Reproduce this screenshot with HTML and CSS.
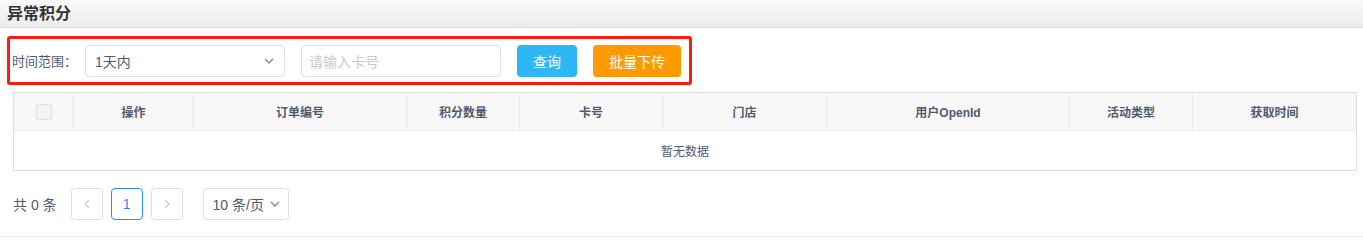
FILE: index.html
```html
<!DOCTYPE html>
<html lang="zh-CN">
<head>
    <meta charset="UTF-8">
    <title>异常积分</title>
    <link rel="stylesheet" href="styles.css">
</head>
<body>

    <div class="page-head">
        <h1>异常积分</h1>
    </div>

    <div class="content">
        <div class="search-box">
            <span class="label">时间范围：</span>
            <div class="select">
                <span>1天内</span>
                <svg class="arrow" width="10" height="6" viewBox="0 0 10 6"><path d="M1 1 L5 5 L9 1" fill="none" stroke="#808695" stroke-width="1.3"/></svg>
            </div>
            <div class="input"><span class="placeholder">请输入卡号</span></div>
            <button class="btn btn-info">查询</button>
            <button class="btn btn-warning">批量下传</button>
        </div>

        <table class="grid">
            <colgroup>
                <col style="width:60px">
                <col style="width:120px">
                <col style="width:213px">
                <col style="width:113px">
                <col style="width:143px">
                <col style="width:164px">
                <col style="width:243px">
                <col style="width:123px">
                <col>
            </colgroup>
            <thead>
                <tr>
                    <th><span class="checkbox"></span></th>
                    <th>操作</th>
                    <th>订单编号</th>
                    <th>积分数量</th>
                    <th>卡号</th>
                    <th>门店</th>
                    <th>用户OpenId</th>
                    <th>活动类型</th>
                    <th>获取时间</th>
                </tr>
            </thead>
            <tbody>
                <tr>
                    <td colspan="9" class="empty">暂无数据</td>
                </tr>
            </tbody>
        </table>

        <div class="pager">
            <span class="total">共 0 条</span>
            <span class="page-item disabled">
                <svg width="8" height="10" viewBox="0 0 8 10"><path d="M6 1 L2 5 L6 9" fill="none" stroke="#c5c8ce" stroke-width="1.2"/></svg>
            </span>
            <span class="page-item active">1</span>
            <span class="page-item disabled">
                <svg width="8" height="10" viewBox="0 0 8 10"><path d="M2 1 L6 5 L2 9" fill="none" stroke="#c5c8ce" stroke-width="1.2"/></svg>
            </span>
            <span class="page-size">10 条/页
                <svg width="10" height="6" viewBox="0 0 10 6"><path d="M1 1 L5 5 L9 1" fill="none" stroke="#808695" stroke-width="1.3"/></svg>
            </span>
        </div>
    </div>

    <div class="bottom-line"></div>

</body>
</html>
```

FILE: styles.css
```css
body {
    margin: 0;
    background-color: #fff;
    color: #515a6e;
    font-family: "Liberation Sans", "Noto Sans CJK SC", sans-serif;
    font-size: 12px;
}
.page-head {
    height: 27px;
    border-bottom: 1px solid #dcdcdc;
    background: linear-gradient(to bottom, #fafafa, #ececec);
    padding-left: 7px;
}
.page-head h1 {
    margin: 0;
    font-size: 16px;
    line-height: 27px;
    color: #333;
    font-weight: bold;
}
.content {
    padding: 8px 6px 0 7px;
}
.search-box {
    display: flex;
    align-items: center;
    width: 677px;
    height: 43px;
    border: 3px solid #ff1a12;
    border-radius: 3px;
    padding: 0 0 0 2px;
    box-sizing: content-box;
}
.search-box > * {
    flex-shrink: 0;
    white-space: nowrap;
}
.label {
    font-size: 13px;
    width: 73px;
}
.select, .input {
    box-sizing: border-box;
    height: 32px;
    border: 1px solid #dcdee2;
    border-radius: 4px;
    display: flex;
    align-items: center;
    padding: 0 10px 0 9px;
    font-size: 14px;
}
.select {
    width: 200px;
    justify-content: space-between;
    margin-right: 16px;
}
.input {
    width: 200px;
    margin-right: 16px;
    padding-left: 7px;
}
.placeholder {
    color: #c5c8ce;
}
.btn {
    height: 32px;
    border: none;
    border-radius: 4px;
    color: #fff;
    font-size: 14px;
    font-family: inherit;
    padding: 0 16px;
    margin-right: 16px;
}
.btn-info {
    width: 60px;
    background-color: #2db7f5;
}
.btn-warning {
    width: 88px;
    margin-right: 0;
    background-color: #ff9900;
}
.grid {
    margin: 7px 0 0 6px;
    width: 1344px;
    table-layout: fixed;
    border-collapse: collapse;
    border: 1px solid #dcdee2;
}
.grid th {
    height: 37px;
    padding: 0;
    background-color: #f8f8f9;
    border-right: 1px solid #e8eaec;
    border-bottom: 1px solid #e8eaec;
    font-weight: bold;
    text-align: center;
}
.grid th:last-child {
    border-right: none;
}
.checkbox {
    display: inline-block;
    vertical-align: middle;
    width: 14px;
    height: 14px;
    border: 1px solid #dcdee2;
    border-radius: 2px;
    background-color: #f3f3f3;
}
.empty {
    height: 39px;
    padding: 0;
    text-align: center;
}
.pager {
    display: flex;
    align-items: center;
    margin: 17px 0 0 6px;
    font-size: 14px;
}
.total {
    margin-right: 14px;
}
.page-item {
    box-sizing: border-box;
    width: 32px;
    height: 32px;
    border: 1px solid #dcdee2;
    border-radius: 4px;
    display: flex;
    align-items: center;
    justify-content: center;
    margin-right: 8px;
}
.page-item.active {
    border-color: #2d8cf0;
    color: #2d8cf0;
}
.page-size {
    box-sizing: border-box;
    height: 32px;
    width: 86px;
    margin-left: 12px;
    border: 1px solid #dcdee2;
    border-radius: 4px;
    display: flex;
    align-items: center;
    justify-content: space-between;
    padding: 0 8px 0 9px;
}
.bottom-line {
    margin-top: 16px;
    border-top: 1px solid #e8eaec;
}
```
